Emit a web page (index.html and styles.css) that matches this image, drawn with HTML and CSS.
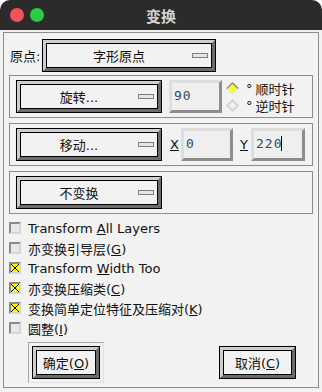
FILE: index.html
```html
<!DOCTYPE html>
<html lang="zh-CN">

<head>
    <meta charset="UTF-8">
    <title>变换</title>
    <link rel="stylesheet" href="styles.css">
</head>

<body>
    <div class="window">
        <div class="titlebar">
            <div class="lights">
                <span class="light light-red"></span><span class="light light-green"></span>
            </div>
            <div class="title">变换</div>
            <div></div>
        </div>

        <div class="frame">
            <!-- origin -->
            <div class="origin-row">
                <span class="origin-label">原点:</span>
                <div class="btn btn-origin">
                    <div class="btn-in"><span class="btn-label">字形原点</span><span class="menu-mark"></span></div>
                </div>
            </div>

            <!-- rotate -->
            <div class="group">
                <div class="btn btn-action">
                    <div class="btn-in"><span class="btn-label">旋转...</span><span class="menu-mark"></span></div>
                </div>
                <div class="field field-rot">90</div>
                <div class="radios">
                    <div class="radio">
                        <svg class="diamond" width="13" height="13" viewBox="0 0 13 13">
                            <polygon points="6.5,0 13,6.5 6.5,13 0,6.5" fill="#e4e4e4" />
                            <polygon points="6.5,0 13,6.5 11,6.5 6.5,2 2,6.5 0,6.5" fill="#8c8c8c" />
                            <polygon points="6.5,2.5 10.5,6.5 6.5,10.5 2.5,6.5" fill="#ffff00" />
                        </svg>
                        <span class="deg">°</span><span>顺时针</span>
                    </div>
                    <div class="radio">
                        <svg class="diamond" width="13" height="13" viewBox="0 0 13 13">
                            <polygon points="6.5,0 13,6.5 6.5,13 0,6.5" fill="#d2d2d2" />
                            <polygon points="6.5,2.5 10.5,6.5 6.5,10.5 2.5,6.5" fill="#f2f2f2" />
                        </svg>
                        <span class="deg">°</span><span>逆时针</span>
                    </div>
                </div>
            </div>

            <!-- move -->
            <div class="group">
                <div class="btn btn-action">
                    <div class="btn-in"><span class="btn-label">移动...</span><span class="menu-mark"></span></div>
                </div>
                <span class="axis axis-x"><u>X</u></span>
                <div class="field field-x">0</div>
                <span class="axis axis-y"><u>Y</u></span>
                <div class="field field-y">220<span class="caret"></span></div>
            </div>

            <!-- none -->
            <div class="group">
                <div class="btn btn-action">
                    <div class="btn-in"><span class="btn-label">不变换</span><span class="menu-mark"></span></div>
                </div>
            </div>

            <ul class="checks">
                <li><span class="check"></span><span>Transform <u>A</u>ll Layers</span></li>
                <li><span class="check"></span><span>亦变换引导层(<u>G</u>)</span></li>
                <li><span class="check checked"></span><span>Transform <u>W</u>idth Too</span></li>
                <li><span class="check checked"></span><span>亦变换压缩类(<u>C</u>)</span></li>
                <li><span class="check checked"></span><span>变换简单定位特征及压缩对(<u>K</u>)</span></li>
                <li><span class="check"></span><span>圆整(<u>I</u>)</span></li>
            </ul>

            <div class="actions">
                <div class="default-ring">
                    <div class="btn btn-ok">
                        <div class="btn-in"><span class="btn-label">确定(<u>O</u>)</span></div>
                    </div>
                </div>
                <div class="btn btn-cancel">
                    <div class="btn-in"><span class="btn-label">取消(<u>C</u>)</span></div>
                </div>
            </div>
        </div>
    </div>
</body>

</html>
```

FILE: styles.css
```css
/* dialog palette */
:root {
    --bg: #f2f2f2;
    --line: #8c8c8c;
    --bevel-light: #cfcfcf;
    --bevel-dark: #6b6b6b;
    --text: #111111;
}

html,
body {
    margin: 0;
    background: #ffffff;
}

body {
    font-family: "DejaVu Sans", "Noto Sans CJK SC", sans-serif;
    font-size: 13px;
    color: var(--text);
}

.window {
    width: 322px;
    height: 392px;
    background: var(--bg);
    border-radius: 10px 10px 0 0;
    overflow: hidden;
}

/* title bar */
.titlebar {
    height: 30px;
    background: #2b2b2b;
    display: grid;
    grid-template-columns: 1fr auto 1fr;
    align-items: center;
}

.lights {
    display: flex;
    gap: 6px;
    padding-left: 10px;
}

.light {
    width: 14px;
    height: 14px;
    border-radius: 50%;
}

.light-red {
    background: #f4515a;
}

.light-green {
    background: #2bcb42;
}

.title {
    font-family: "Noto Sans CJK SC", sans-serif;
    font-weight: bold;
    font-size: 15px;
    color: #d4d4d4;
}

/* main frame */
.frame {
    box-sizing: border-box;
    margin: 2px 3px 0 3px;
    height: 356px;
    border: 1px solid var(--line);
}

.origin-row {
    display: flex;
    align-items: center;
    margin-top: 6px;
    padding-left: 6px;
}

.origin-label {
    width: 32px;
}

/* buttons */
.btn {
    box-sizing: border-box;
    height: 33px;
    border: 1px solid #000;
    display: flex;
}

.btn-in {
    flex: 1;
    display: flex;
    align-items: center;
    border: 3px solid;
    border-color: var(--bevel-light) var(--bevel-dark) var(--bevel-dark) var(--bevel-light);
    box-shadow: inset 0 0 0 1px #000;
    background: var(--bg);
}

.btn-label {
    flex: 1;
    text-align: center;
    white-space: nowrap;
}

.menu-mark {
    box-sizing: border-box;
    width: 16px;
    height: 5px;
    margin-right: 4px;
    border: 1px solid #808080;
    background: #e6e6e6;
}

.btn-origin {
    width: 174px;
}

.btn-action {
    width: 146px;
}

/* group boxes */
.group {
    box-sizing: border-box;
    height: 43px;
    margin: 3px 5px 0;
    padding: 4px 6px;
    border: 1px solid var(--line);
    display: flex;
    align-items: center;
}

.group + .group {
    margin-top: 5px;
}

/* text fields */
.field {
    box-sizing: border-box;
    height: 33px;
    padding: 0 0 2px 2px;
    border: 3px solid;
    border-color: #dedede #8e8e8e #8e8e8e #dedede;
    background: #efefef;
    display: flex;
    align-items: center;
    font-family: "DejaVu Sans Mono", monospace;
    font-size: 13px;
    letter-spacing: 1px;
    color: #2f4a68;
}

.field-rot {
    width: 53px;
    margin-left: 7px;
}

.field-x {
    width: 52px;
}

.field-y {
    width: 54px;
}

.caret {
    display: inline-block;
    width: 1px;
    height: 15px;
    margin-left: -1px;
    background: #000;
}

.axis {
    width: 11px;
}

.axis-x {
    margin-left: 8px;
}

.axis-y {
    margin-left: 7px;
}

/* radios */
.radios {
    margin-left: 4px;
    display: flex;
    flex-direction: column;
}

.radio {
    height: 17px;
    display: flex;
    align-items: center;
    white-space: nowrap;
}

.deg {
    margin: 0 3px 0 7px;
}

/* checkboxes */
.checks {
    list-style: none;
    margin: 4px 0 0;
    padding: 0 0 0 5px;
}

.checks li {
    height: 20px;
    display: flex;
    align-items: center;
    white-space: nowrap;
}

.check {
    box-sizing: border-box;
    width: 12px;
    height: 12px;
    margin-right: 7px;
    border: 2px solid;
    border-color: #8a8a8a #d6d6d6 #d6d6d6 #8a8a8a;
    background: #e8e8e8;
}

.check.checked {
    background-color: #ffff00;
    background-image:
        linear-gradient(45deg, transparent 44%, #000 44%, #000 56%, transparent 56%),
        linear-gradient(-45deg, transparent 44%, #000 44%, #000 56%, transparent 56%);
}

/* bottom buttons */
.actions {
    display: flex;
    justify-content: space-between;
    align-items: center;
    margin-top: 4px;
    padding: 0 22px 0 24px;
}

.default-ring {
    padding: 3px;
    border: 1px solid;
    border-color: #a6a6a6 #e0e0e0 #e0e0e0 #a6a6a6;
}

.btn-ok {
    width: 68px;
}

.btn-cancel {
    width: 77px;
}
```
